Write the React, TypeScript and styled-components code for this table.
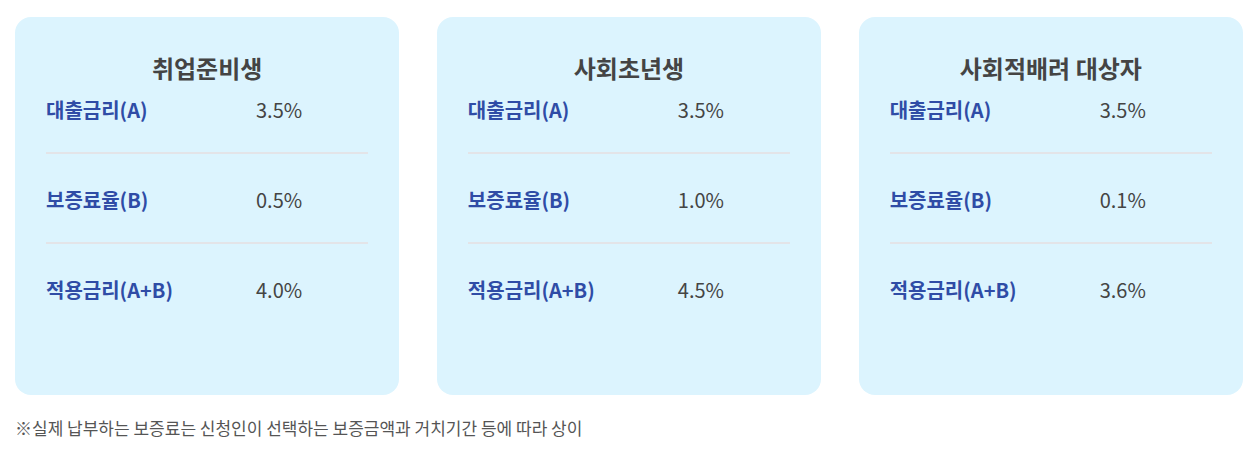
import React from "react";
import styled, { createGlobalStyle } from "styled-components";

const GlobalStyle = createGlobalStyle`
  body {
    margin: 0;
    background: #ffffff;
    font-family: "Noto Sans CJK KR", "Noto Sans", sans-serif;
  }
`;

const Page = styled.div`
  padding: 17px 15px 0;
  width: 1228px;
`;

const Grid = styled.div`
  display: grid;
  grid-template-columns: repeat(3, 1fr);
  column-gap: 37.5px;
`;

const Card = styled.div`
  background: #dcf4fe;
  border-radius: 16px;
  height: 378px;
  box-sizing: border-box;
  padding: 36px 31px 0;
`;

const Title = styled.h3`
  margin: 0;
  text-align: center;
  font-size: 24px;
  line-height: 30px;
  font-weight: 700;
  color: #444444;
`;

const Row = styled.div<{ $last?: boolean }>`
  display: grid;
  grid-template-columns: 210px 1fr;
  align-items: center;
  padding: 33px 0 29px;
  border-bottom: ${(p) => (p.$last ? "none" : "2px solid #e3e4e8")};
  &:first-of-type {
    padding-top: 14px;
  }
`;

const Label = styled.span`
  font-size: 20px;
  line-height: 26px;
  font-weight: 700;
  color: #2f4ca6;
`;

const Value = styled.span`
  font-size: 20px;
  line-height: 26px;
  font-weight: 400;
  color: #444444;
`;

const Note = styled.p`
  margin: 22px 0 0;
  font-size: 17px;
  line-height: 22px;
  color: #555555;
`;

const data = [
  { title: "취업준비생", vals: ["3.5%", "0.5%", "4.0%"] },
  { title: "사회초년생", vals: ["3.5%", "1.0%", "4.5%"] },
  { title: "사회적배려 대상자", vals: ["3.5%", "0.1%", "3.6%"] },
];

const labels = ["대출금리(A)", "보증료율(B)", "적용금리(A+B)"];

export default function App() {
  return (
    <>
      <GlobalStyle />
      <Page>
        <Grid>
          {data.map((c) => (
            <Card key={c.title}>
              <Title>{c.title}</Title>
              {labels.map((l, i) => (
                <Row key={l} $last={i === labels.length - 1}>
                  <Label>{l}</Label>
                  <Value>{c.vals[i]}</Value>
                </Row>
              ))}
            </Card>
          ))}
        </Grid>
        <Note>※실제 납부하는 보증료는 신청인이 선택하는 보증금액과 거치기간 등에 따라 상이</Note>
      </Page>
    </>
  );
}
